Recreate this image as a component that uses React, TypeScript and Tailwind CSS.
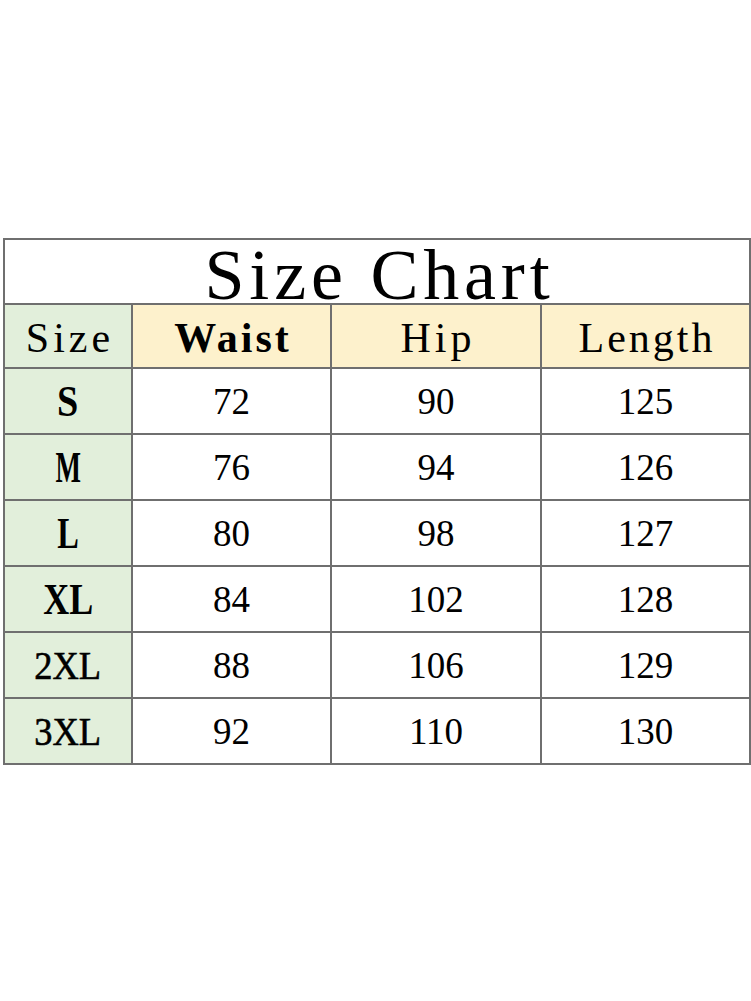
import React from "react";

const rows = [
  { size: "S", bold: true, sx: "scale-x-[0.85]", waist: "72", hip: "90", len: "125" },
  { size: "M", bold: true, sx: "scale-x-[0.6]", waist: "76", hip: "94", len: "126" },
  { size: "L", bold: true, sx: "scale-x-[0.72]", waist: "80", hip: "98", len: "127" },
  { size: "XL", bold: true, sx: "scale-x-[0.8]", waist: "84", hip: "102", len: "128" },
  { size: "2XL", bold: false, sx: "scale-x-[0.89]", waist: "88", hip: "106", len: "129" },
  { size: "3XL", bold: false, sx: "scale-x-[0.89]", waist: "92", hip: "110", len: "130" },
];

export default function App() {
  return (
    <div className="min-h-screen w-full bg-white pt-[238px] pl-[3px] font-['Liberation_Serif',serif] text-black">
      <div className="grid w-[748px] grid-cols-[126px_197px_208px_207px] grid-rows-[63px_62px_64px_64px_64px_64px_64px_64px] gap-[2px] bg-[#6f6f6f] p-[2px]">
        <div className="col-span-4 flex items-start justify-center bg-white pt-[8px]">
          <span className="block text-[72px] leading-[55px] tracking-[4.8px] pl-[5px]">Size Chart</span>
        </div>
        <div className="flex items-center justify-center bg-[#e2efdb]">
          <span className="text-[42px] leading-none tracking-[4px] pl-[4px] translate-y-[2px]">Size</span>
        </div>
        <div className="flex items-center justify-center bg-[#fdf1cc]">
          <span className="text-[42px] font-bold leading-none tracking-[3px] pl-[3px] translate-y-[2px]">Waist</span>
        </div>
        <div className="flex items-center justify-center bg-[#fdf1cc]">
          <span className="text-[42px] leading-none tracking-[4px] pl-[4px] translate-y-[2px]">Hip</span>
        </div>
        <div className="flex items-center justify-center bg-[#fdf1cc]">
          <span className="text-[42px] leading-none tracking-[3px] pl-[3px] translate-y-[2px]">Length</span>
        </div>
        {rows.map((r) => (
          <React.Fragment key={r.size}>
            <div className="flex items-center justify-center bg-[#e2efdb]">
              <span
                className={
                  r.bold
                    ? `inline-block text-[45px] font-bold leading-none ${r.sx}`
                    : `inline-block text-[41px] leading-none [-webkit-text-stroke:0.6px_black] ${r.sx}`
                }
              >
                {r.size}
              </span>
            </div>
            <div className="flex items-center justify-center bg-white">
              <span className="text-[37px] leading-none">{r.waist}</span>
            </div>
            <div className="flex items-center justify-center bg-white">
              <span className="text-[37px] leading-none">{r.hip}</span>
            </div>
            <div className="flex items-center justify-center bg-white">
              <span className="text-[37px] leading-none">{r.len}</span>
            </div>
          </React.Fragment>
        ))}
      </div>
    </div>
  );
}
